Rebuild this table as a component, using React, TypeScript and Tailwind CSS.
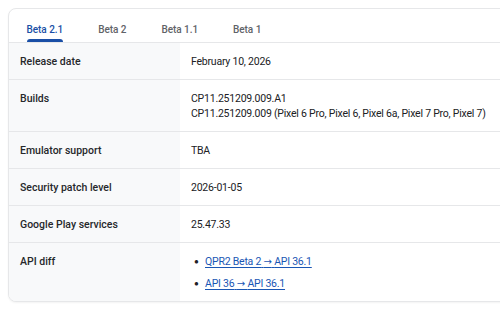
import React from "react";

const Arrow = () => (
  <span style={{ fontFamily: "'DejaVu Sans', sans-serif", fontSize: "10px" }}>→</span>
);

const rows: { label: string; value: React.ReactNode }[] = [
  { label: "Release date", value: "February 10, 2026" },
  {
    label: "Builds",
    value: (
      <>
        <div>CP11.251209.009.A1</div>
        <div>CP11.251209.009 (Pixel 6 Pro, Pixel 6, Pixel 6a, Pixel 7 Pro, Pixel 7)</div>
      </>
    ),
  },
  { label: "Emulator support", value: "TBA" },
  { label: "Security patch level", value: "2026-01-05" },
  { label: "Google Play services", value: "25.47.33" },
  {
    label: "API diff",
    value: (
      <ul className="flex flex-col gap-[7px] list-none">
        {[
          ["QPR2 Beta 2", "API 36.1"],
          ["API 36", "API 36.1"],
        ].map(([a, b]) => (
          <li key={a} className="flex items-center">
            <span className="w-[14px] pl-[3px] text-[#202124] text-[8px]">●</span>
            <a className="text-[#1a56b4] underline underline-offset-[2px]" href="#">
              {a} <Arrow /> {b}
            </a>
          </li>
        ))}
      </ul>
    ),
  },
];

export default function App() {
  const tabs = ["Beta 2.1", "Beta 2", "Beta 1.1", "Beta 1"];
  return (
    <div
      className="w-[500px] h-[310px] bg-white pt-[8px] pl-[8px] overflow-hidden"
      style={{ fontFamily: "Roboto, 'Liberation Sans', sans-serif" }}
    >
      <div className="w-[520px] border border-[#e6e7e9] rounded-[8px] overflow-hidden bg-white text-[10.5px] leading-[15px] text-[#202124] shadow-[0_1px_2px_rgba(0,0,0,0.05)]">
        <div className="flex h-[34px] border-b border-[#e6e7e9]">
          {tabs.map((t, i) => (
            <div key={t} className="px-[17.5px] flex flex-col justify-end">
              <div
                className={`h-[17px] text-[10px] font-medium flex items-start tracking-[-0.05px] ${
                  i === 0 ? "text-[#1a4fa6]" : "text-[#5f6368]"
                }`}
              >
                {t}
              </div>
              <div className={`h-[3px] rounded-t-[3px] ${i === 0 ? "bg-[#1a4fa6]" : "bg-transparent"}`} />
            </div>
          ))}
        </div>
        {rows.map((r, i) => (
          <div
            key={r.label}
            className={`flex ${i < rows.length - 1 ? "border-b border-[#e6e7e9]" : ""}`}
          >
            <div className="w-[171px] shrink-0 bg-[#f8f9fa] px-[11px] py-[10.5px] font-medium text-[#26282b]">
              {r.label}
            </div>
            <div className="flex-1 px-[11px] py-[10.5px] tracking-[-0.22px]">{r.value}</div>
          </div>
        ))}
      </div>
    </div>
  );
}
